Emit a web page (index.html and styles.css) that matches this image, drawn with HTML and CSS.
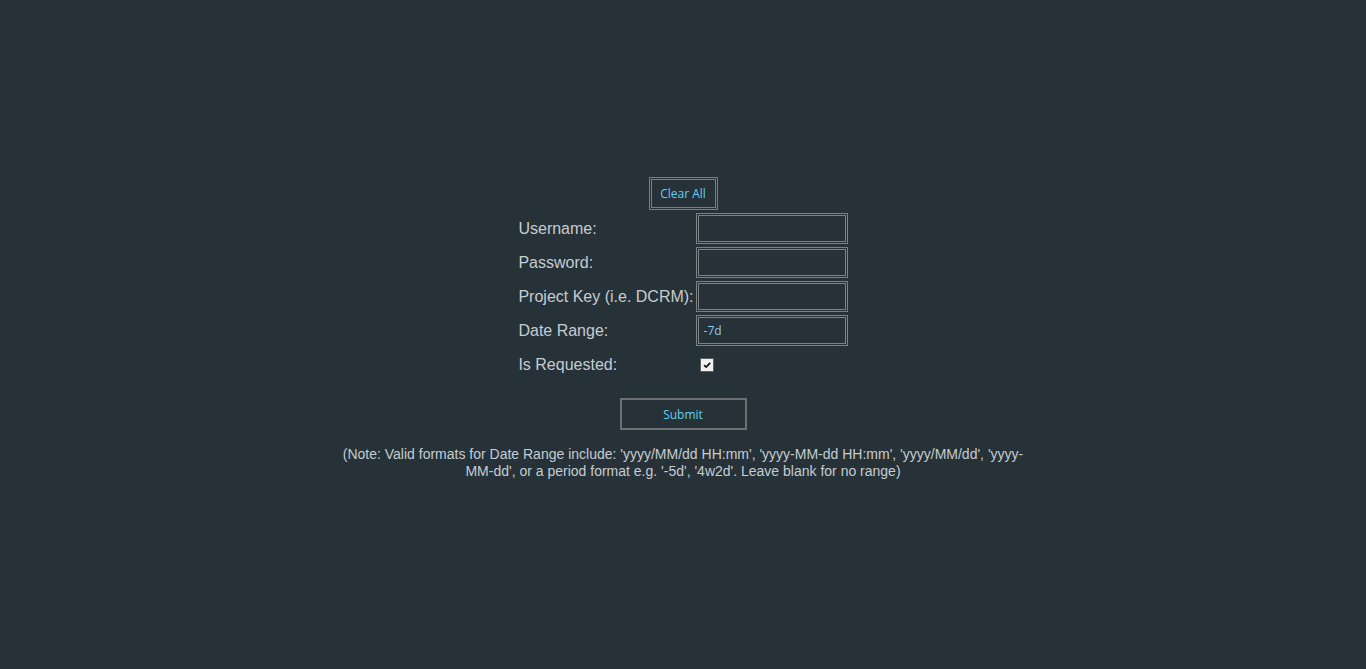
FILE: index.html
```html
<!DOCTYPE html>
<html>
<head>
<meta charset="utf-8">
<link rel="stylesheet" href="styles.css">
</head>
<body>
<main class="page">
  <button class="btn btn-clear" type="button">Clear All</button>
  <form class="form">
    <label class="label" for="u">Username:</label>
    <input class="field" id="u" type="text">
    <label class="label" for="p">Password:</label>
    <input class="field" id="p" type="password">
    <label class="label" for="k">Project Key (i.e. DCRM):</label>
    <input class="field" id="k" type="text">
    <label class="label" for="d">Date Range:</label>
    <input class="field" id="d" type="text" value="-7d">
    <label class="label" for="r">Is Requested:</label>
    <div class="check-cell"><input class="check" id="r" type="checkbox" checked></div>
  </form>
  <button class="btn btn-submit" type="button">Submit</button>
  <p class="note">(Note: Valid formats for Date Range include: 'yyyy/MM/dd HH:mm', 'yyyy-MM-dd HH:mm', 'yyyy/MM/dd', 'yyyy-MM-dd', or a period format e.g. '-5d', '4w2d'. Leave blank for no range)</p>
</main>
</body>
</html>
```
FILE: styles.css
```css
html, body {
  margin: 0;
  padding: 0;
  background: #263238;
  height: 100%;
}
body {
  font-family: "Liberation Sans", Arial, sans-serif;
  color: #c5ccd2;
}
.page {
  display: flex;
  flex-direction: column;
  align-items: center;
  padding-top: 177px;
}
.btn {
  font-family: "Open Sans", Tahoma, sans-serif;
  font-size: 12px;
  color: #66cdf0;
  background: #263238;
  cursor: pointer;
}
.btn-clear {
  width: 69px;
  height: 33px;
  border: 3px double #7a7e80;
  padding: 0 0 1px;
}
.btn-submit {
  width: 127px;
  height: 32px;
  border: 2px solid #6b7073;
  margin-top: 18px;
  padding: 0;
}
.form {
  display: grid;
  grid-template-columns: auto 152px;
  column-gap: 2px;
  row-gap: 3px;
  margin-top: 3px;
  align-items: center;
}
.label {
  font-size: 16px;
  line-height: 31px;
  height: 31px;
}
.field {
  box-sizing: border-box;
  width: 152px;
  height: 31px;
  border: 3px double #7d8184;
  background: #263238;
  color: #8ec9ef;
  font-family: "Open Sans", Tahoma, sans-serif;
  font-size: 12px;
  padding: 0 5px;
  margin: 0;
}
.check-cell {
  height: 31px;
  display: flex;
  align-items: center;
}
.check {
  appearance: none;
  -webkit-appearance: none;
  box-sizing: border-box;
  width: 14px;
  height: 14px;
  margin: 0 0 0 4px;
  border: 1px solid #5a5f62;
  background: #f1f1f1 url("data:image/svg+xml,%3Csvg xmlns='http://www.w3.org/2000/svg' viewBox='0 0 12 12'%3E%3Cpath d='M2.5 6.2 L5 8.6 L9.8 3.4' fill='none' stroke='%23111' stroke-width='2'/%3E%3C/svg%3E") center/10px 10px no-repeat;
}
.note {
  width: 690px;
  margin: 16px 0 0;
  text-align: center;
  font-size: 14px;
  line-height: 17px;
}
```
